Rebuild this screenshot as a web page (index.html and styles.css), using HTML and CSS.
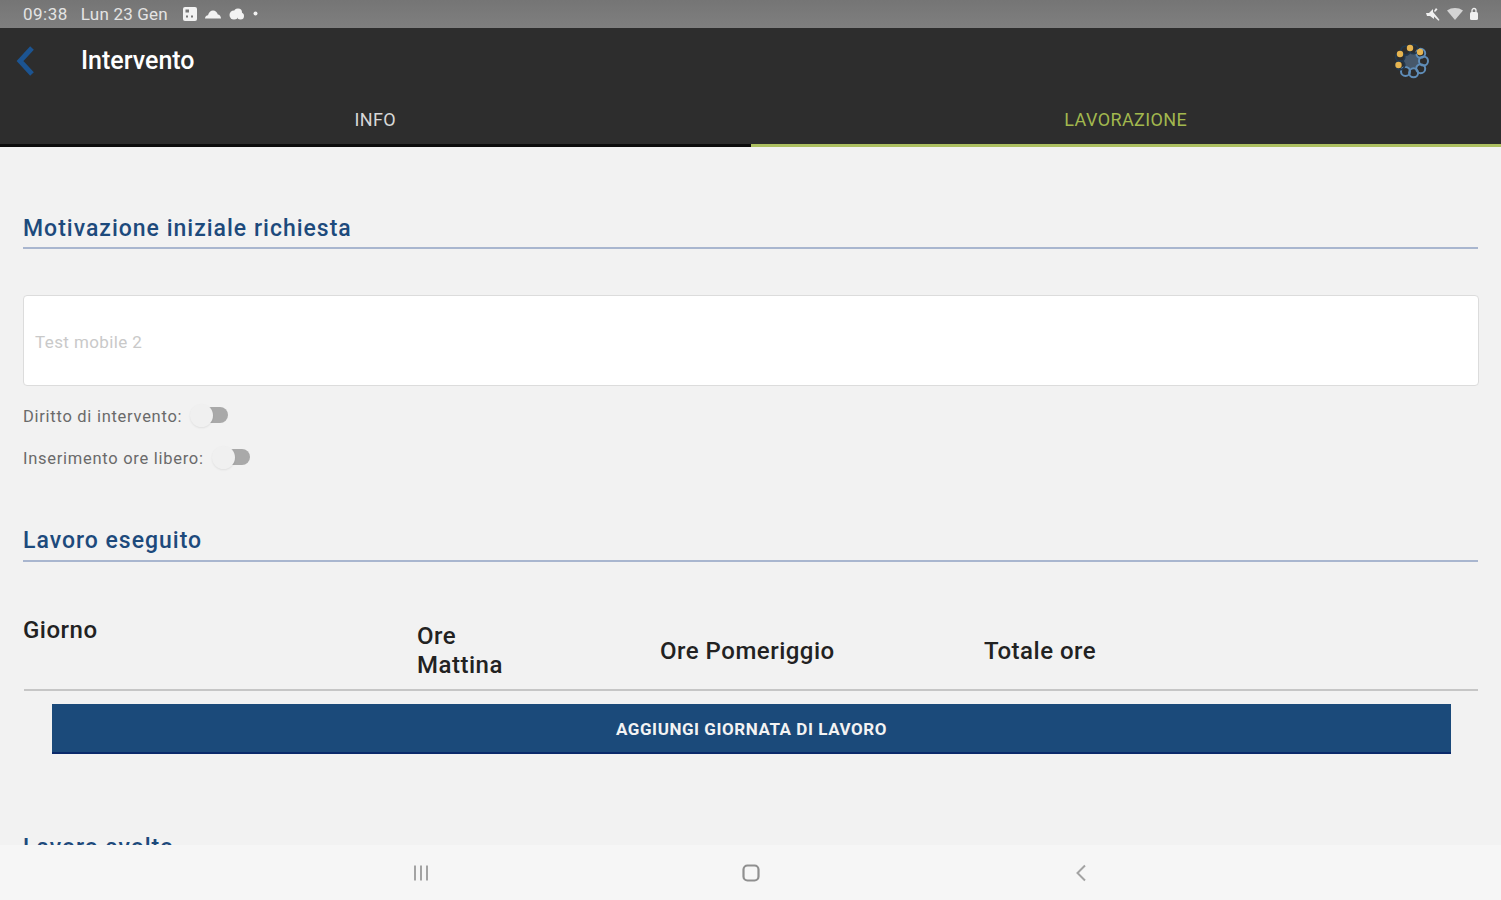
FILE: index.html
```html
<!DOCTYPE html>
<html lang="it">
<head>
<meta charset="utf-8">
<title>Intervento</title>
<link rel="stylesheet" href="styles.css">
</head>
<body>
<div class="app">
  <div class="statusbar">
    <div class="status-left">
      <span class="time">09:38</span>
      <span class="date">Lun 23 Gen</span>
      <span class="status-icons">
        <svg width="16" height="16" viewBox="0 0 16 16"><rect x="1" y="1" width="14" height="14" rx="2" fill="#f2f2f2"/><rect x="3.500" y="3.500" width="3.500" height="3" fill="#777"/><rect x="9" y="9.500" width="2" height="2" fill="#777"/><rect x="4" y="9.500" width="2" height="2" fill="#777"/></svg>
        <svg width="18" height="12" viewBox="0 0 18 12"><path d="M1 10.500c0-2 1.400-3.200 3-3.300C4.800 4.400 6.800 2.500 9 2.500c2.400 0 4.300 1.700 4.800 4 1.800.1 3.200 1.800 3.200 4z" fill="#f2f2f2"/></svg>
        <svg width="17" height="13" viewBox="0 0 17 13"><circle cx="6" cy="8" r="4.500" fill="#f2f2f2"/><circle cx="10" cy="5.500" r="4" fill="#f2f2f2"/><circle cx="12.500" cy="9" r="3.500" fill="#f2f2f2"/></svg>
        <svg class="status-dot" width="5" height="5" viewBox="0 0 5 5"><circle cx="2.500" cy="2.500" r="2" fill="#f2f2f2"/></svg>
      </span>
    </div>
    <div class="status-right">
      <svg width="16" height="14" viewBox="0 0 16 14"><path d="M1 6h3l4-4v3l5 6 1.500 2-1 .8L9 9.500V12L5 9H2z" fill="#f0f0f0"/><path d="M11 1l1.500 1.500L10 5 9 4z" fill="#f0f0f0"/></svg>
      <svg width="18" height="14" viewBox="0 0 18 14"><path d="M1 3.500C3.500 1.800 6 1 9 1s5.500.8 8 2.500L9 13z" fill="#d4d4d4"/></svg>
      <svg width="10" height="14" viewBox="0 0 10 14"><rect x="1" y="5" width="8" height="8" rx="1.500" fill="#f0f0f0"/><path d="M3 5.500V3.500a2 2 0 0 1 4 0v2" fill="none" stroke="#f0f0f0" stroke-width="1.300"/></svg>
    </div>
  </div>

  <header class="toolbar">
    <svg class="back" width="22" height="32" viewBox="0 0 22 32"><path d="M18 3L6 16l12 13" fill="none" stroke="#1c5491" stroke-width="5"/></svg>
    <h1 class="title">Intervento</h1>
    <svg class="logo" width="38" height="38" viewBox="0 0 38 38">
      <circle cx="18.500" cy="19" r="8" fill="#46586b"/>
      <g fill="none" stroke="#5f8db8" stroke-width="2">
        <circle cx="27.700" cy="11.300" r="4.500"/><circle cx="30.500" cy="19" r="4.500"/><circle cx="27.700" cy="26.700" r="4.500"/><circle cx="20.600" cy="30.800" r="4.500"/><circle cx="12.500" cy="29.400" r="4.500"/>
      </g>
      <g fill="none" stroke="#22384e" stroke-width="1.800">
        <circle cx="7.200" cy="23.100" r="4.500"/><circle cx="7.200" cy="14.900" r="4.500"/><circle cx="12.500" cy="8.600" r="4.500"/><circle cx="20.600" cy="7.200" r="4.500"/>
      </g>
      <circle cx="7" cy="12" r="3.200" fill="#e6b450"/><circle cx="17" cy="6" r="3.200" fill="#e6b450"/><circle cx="27" cy="10" r="3.200" fill="#e6b450"/><circle cx="5.500" cy="23" r="3.200" fill="#e6b450"/>
    </svg>
  </header>

  <nav class="tabs">
    <div class="tab">INFO</div>
    <div class="tab tab-active">LAVORAZIONE</div>
  </nav>

  <main class="content">
    <section class="first-section">
      <h2 class="section-title">Motivazione iniziale richiesta</h2>
      <div class="textbox">Test mobile 2</div>
      <div class="toggle-row"><span>Diritto di intervento:</span><span class="switch"></span></div>
      <div class="toggle-row toggle-row-second"><span>Inserimento ore libero:</span><span class="switch"></span></div>
    </section>

    <section class="work-section">
      <h2 class="section-title section-title-tight">Lavoro eseguito</h2>
      <div class="table-head">
        <div class="col col-day">Giorno</div>
        <div class="col col-morning">Ore<br>Mattina</div>
        <div class="col col-afternoon">Ore Pomeriggio</div>
        <div class="col col-total">Totale ore</div>
      </div>
      <button class="add-btn" type="button">AGGIUNGI GIORNATA DI LAVORO</button>
    </section>

    <section class="last-section">
      <h2 class="section-title">Lavoro svolto</h2>
    </section>
  </main>

  <footer class="navbar">
    <svg width="18" height="18" viewBox="0 0 18 18"><path d="M3 1.500v15M9 1.500v15M15 1.500v15" stroke="#a3a3a3" stroke-width="2" fill="none"/></svg>
    <svg width="18" height="18" viewBox="0 0 18 18"><rect x="1.500" y="1.500" width="15" height="15" rx="4" stroke="#8f8f8f" stroke-width="2.200" fill="none"/></svg>
    <svg width="18" height="18" viewBox="0 0 18 18"><path d="M13 1.500L5.500 9l7.500 7.500" stroke="#a3a3a3" stroke-width="2" fill="none"/></svg>
  </footer>
</div>
</body>
</html>
```

FILE: styles.css
```css
html, body {
  margin: 0;
  height: 100%;
  overflow: hidden;
}

body {
  font-family: Roboto, "Liberation Sans", sans-serif;
  background: #f2f2f2;
}

.app {
  display: flex;
  flex-direction: column;
  height: 900px;
}

.statusbar {
  flex: 0 0 28px;
  display: flex;
  justify-content: space-between;
  align-items: center;
  box-sizing: border-box;
  padding: 0 22px 1px 23px;
  background: linear-gradient(#757575, #7f7f7f);
  color: #e4e4e4;
  font-size: 17px;
}

.status-left,
.status-right,
.status-icons {
  display: flex;
  align-items: center;
}

.time { letter-spacing: 0.5px; }

.date {
  margin-left: 13px;
  letter-spacing: 0.2px;
}

.status-icons {
  gap: 6px;
  margin-left: 14px;
}

.status-dot { margin-left: 2px; }

.status-right { gap: 5px; }

.toolbar {
  flex: 0 0 65px;
  display: flex;
  align-items: center;
  padding: 0 70px 0 14px;
  background: #2d2d2d;
}

.back { flex: none; }

.title {
  margin: 0 0 0 45px;
  flex: 1;
  color: #fff;
  font-size: 25px;
  font-weight: 500;
}

.logo { flex: none; }

.tabs {
  flex: 0 0 54px;
  display: flex;
  box-sizing: border-box;
  background: #2d2d2d;
  border-bottom: 3px solid #0c0c0c;
}

.tab {
  flex: 1;
  margin-bottom: -3px;
  display: flex;
  align-items: center;
  justify-content: center;
  padding-bottom: 1px;
  color: #d8d8d8;
  font-size: 18px;
  letter-spacing: 0.4px;
}

.tab-active {
  color: #a2b84e;
  padding-bottom: 1px;
  box-sizing: border-box;
  border-bottom: 3px solid #adc061;
  padding-top: 3px;
}

.content {
  flex: 1;
  min-height: 0;
  overflow: hidden;
  padding: 0 22px 0 23px;
  background: #f2f2f2;
}

.first-section { padding-top: 66px; }

.section-title {
  margin: 0 1px 0 0;
  height: 36px;
  line-height: 32px;
  box-sizing: border-box;
  color: #1d4a7c;
  font-size: 23px;
  font-weight: 500;
  letter-spacing: 1px;
  border-bottom: 2px solid #a9b6cf;
}

.section-title-tight { line-height: 30px; }

.textbox {
  box-sizing: border-box;
  height: 91px;
  margin-top: 46px;
  padding: 3px 11px 0;
  display: flex;
  align-items: center;
  background: #fff;
  border: 1px solid #dcdcdc;
  border-radius: 4px;
  color: #c9c9c9;
  font-size: 17px;
  letter-spacing: 0.4px;
}

.toggle-row {
  height: 26px;
  margin-top: 17px;
  display: flex;
  align-items: center;
  gap: 8px;
  color: #6a6a6a;
  font-size: 16.500px;
  letter-spacing: 0.72px;
}

.toggle-row-second { margin-top: 16px; }

.switch {
  position: relative;
  display: inline-block;
  width: 38px;
  height: 16px;
  margin-top: -3px;
}

.switch::before {
  content: "";
  position: absolute;
  left: 10px;
  top: 0;
  width: 28px;
  height: 16px;
  border-radius: 8px;
  background: #a9a9a9;
}

.switch::after {
  content: "";
  position: absolute;
  left: 0;
  top: -3px;
  width: 23px;
  height: 23px;
  border-radius: 50%;
  background: #f0f0f0;
  box-shadow: 0 1px 2px rgba(0, 0, 0, 0.08);
}

.work-section { padding-top: 55px; }

.table-head {
  box-sizing: border-box;
  height: 95px;
  margin: 34px 1px 0;
  display: flex;
  color: #222;
  font-size: 24px;
  line-height: 29px;
  font-weight: 500;
  letter-spacing: 0.5px;
  border-bottom: 2px solid #c6c6c6;
}

.col-day {
  width: 394px;
  margin-left: -1px;
  padding-top: 20px;
}

.col-morning {
  width: 243px;
  margin-top: 26px;
}

.col-afternoon {
  width: 324px;
  margin-top: 41px;
}

.col-total { margin-top: 41px; }

.add-btn {
  display: block;
  width: 1399px;
  height: 50px;
  margin: 13px 0 0 29px;
  padding: 2px 0 0;
  border: 0;
  border-bottom: 2px solid #0b2a6b;
  background: #1b4a7a;
  color: #f3f3f3;
  font-family: inherit;
  font-size: 17px;
  font-weight: 700;
  letter-spacing: 0.55px;
}

.last-section { padding-top: 78px; }

.navbar {
  flex: 0 0 55px;
  display: flex;
  align-items: center;
  justify-content: center;
  gap: 312px;
  background: #f6f6f6;
}
```
